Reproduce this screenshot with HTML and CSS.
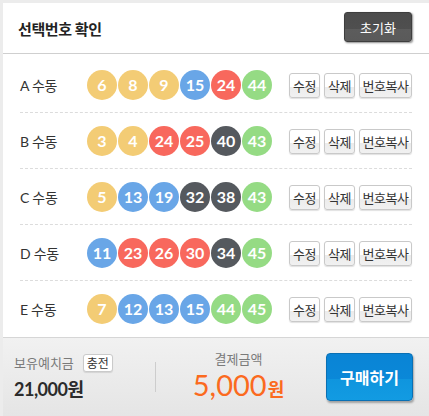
FILE: index.html
```html
<!DOCTYPE html>
<html lang="ko">
<head>
    <meta charset="UTF-8">
    <meta name="viewport" content="width=device-width, initial-scale=1.0">
    <title>선택번호 확인</title>
    <link rel="stylesheet" href="styles.css">
</head>
<body>
    <div class="panel">
        <div class="glava">
            <h2 class="naslov">선택번호 확인</h2>
            <button class="gumbReset">초기화</button>
        </div>

        <ul class="popis">
            <li class="red">
                <span class="oznaka">A 수동</span>
                <span class="kugle">
                    <span class="kugla zuta">6</span><span class="kugla zuta">8</span><span class="kugla zuta">9</span><span class="kugla plava">15</span><span class="kugla crvena">24</span><span class="kugla zelena">44</span>
                </span>
                <span class="akcije">
                    <button class="gumbMali">수정</button>
                    <button class="gumbMali">삭제</button>
                    <button class="gumbMali siroki">번호복사</button>
                </span>
            </li>
            <li class="red">
                <span class="oznaka">B 수동</span>
                <span class="kugle">
                    <span class="kugla zuta">3</span><span class="kugla zuta">4</span><span class="kugla crvena">24</span><span class="kugla crvena">25</span><span class="kugla siva">40</span><span class="kugla zelena">43</span>
                </span>
                <span class="akcije">
                    <button class="gumbMali">수정</button>
                    <button class="gumbMali">삭제</button>
                    <button class="gumbMali siroki">번호복사</button>
                </span>
            </li>
            <li class="red">
                <span class="oznaka">C 수동</span>
                <span class="kugle">
                    <span class="kugla zuta">5</span><span class="kugla plava">13</span><span class="kugla plava">19</span><span class="kugla siva">32</span><span class="kugla siva">38</span><span class="kugla zelena">43</span>
                </span>
                <span class="akcije">
                    <button class="gumbMali">수정</button>
                    <button class="gumbMali">삭제</button>
                    <button class="gumbMali siroki">번호복사</button>
                </span>
            </li>
            <li class="red">
                <span class="oznaka">D 수동</span>
                <span class="kugle">
                    <span class="kugla plava">11</span><span class="kugla crvena">23</span><span class="kugla crvena">26</span><span class="kugla crvena">30</span><span class="kugla siva">34</span><span class="kugla zelena">45</span>
                </span>
                <span class="akcije">
                    <button class="gumbMali">수정</button>
                    <button class="gumbMali">삭제</button>
                    <button class="gumbMali siroki">번호복사</button>
                </span>
            </li>
            <li class="red">
                <span class="oznaka">E 수동</span>
                <span class="kugle">
                    <span class="kugla zuta">7</span><span class="kugla plava">12</span><span class="kugla plava">13</span><span class="kugla plava">15</span><span class="kugla zelena">44</span><span class="kugla zelena">45</span>
                </span>
                <span class="akcije">
                    <button class="gumbMali">수정</button>
                    <button class="gumbMali">삭제</button>
                    <button class="gumbMali siroki">번호복사</button>
                </span>
            </li>
        </ul>

        <div class="podnozje">
            <div class="stanje">
                <div class="stanjeRed">
                    <span class="sivo">보유예치금</span>
                    <button class="gumbPunjenje">충전</button>
                </div>
                <div class="iznos">21,000원</div>
            </div>
            <div class="crta"></div>
            <div class="placanje">
                <div class="sivo">결제금액</div>
                <div class="cijena"><span class="broj">5,000</span><span class="valuta">원</span></div>
            </div>
            <button class="gumbKupi">구매하기</button>
        </div>
    </div>
</body>
</html>
```

FILE: styles.css
```css
body{
    margin: 0;
    background-color: #ececec;
    font-family: Lato, "Noto Sans CJK KR", sans-serif;
    color: #333;
}
.panel{
    margin: 3px 0 0 3px;
    height: 413px;
    background-color: white;
    display: flex;
    flex-direction: column;
}
.glava{
    height: 50px;
    border-bottom: 1px solid #cfcfcf;
    display: flex;
    align-items: center;
    justify-content: space-between;
    padding: 0 17px 0 15px;
}
.naslov{
    margin: 0;
    font-size: 15px;
    font-weight: bold;
    color: #222;
    letter-spacing: -0.4px;
}
.gumbReset{
    width: 68px;
    height: 30px;
    margin-bottom: 2px;
    border: 1px solid #3e3e3e;
    border-radius: 3px;
    background: linear-gradient(#4c4c4c 0, #4f4f4f 58%, #5c5c5c 58%, #5a5a5a 100%);
    color: white;
    font-family: "Noto Sans CJK KR", sans-serif;
    font-size: 13px;
    box-shadow: 1px 1px 2px rgba(0,0,0,0.45);
    padding: 0;
}

.popis{ list-style-type: none; margin: 0 17px; padding: 3px 0 1px 0; }
.red{
    height: 55px;
    display: flex;
    align-items: center;
    border-bottom: 1px dashed #dcdcdc;
}
.red:last-child{ border-bottom: none; }
.oznaka{
    width: 67px;
    font-size: 14px;
    color: #333;
    letter-spacing: -0.3px;
}
.kugle{ display: flex; gap: 1px; }
.kugla{
    width: 30px;
    height: 30px;
    border-radius: 50%;
    display: flex;
    align-items: center;
    justify-content: center;
    color: white;
    font-family: Lato, sans-serif;
    font-weight: bold;
    font-size: 16px;
}
.zuta{ background-color: #f3cc75; }
.plava{ background-color: #69a6e7; }
.crvena{ background-color: #f8685d; }
.siva{ background-color: #55595e; }
.zelena{ background-color: #95db84; }

.akcije{ margin-left: auto; display: flex; gap: 4px; margin-top: 1px; }
.gumbMali{
    width: 31px;
    height: 25px;
    padding: 0;
    border: 1px solid #c9c9c9;
    border-radius: 3px;
    background: linear-gradient(#fff 0, #fff 55%, #ebebeb 55%, #f1f1f1 100%);
    color: #333;
    font-family: "Noto Sans CJK KR", sans-serif;
    font-size: 13px;
    letter-spacing: -0.5px;
    box-shadow: 0 1px 1px rgba(0,0,0,0.12);
}
.gumbMali.siroki{ width: 53px; }

.podnozje{
    flex: 1;
    border-top: 1px solid #d6d6d6;
    background: linear-gradient(#f1f1f1, #e5e5e5);
    display: flex;
    align-items: center;
    padding: 0 16px 0 11px;
}
.stanje{ width: 141px; }
.stanjeRed{ display: flex; align-items: center; gap: 9px; }
.sivo{
    font-family: "Noto Sans CJK KR", sans-serif;
    font-size: 13px;
    color: #7a7a7a;
    line-height: 18px;
}
.gumbPunjenje{
    width: 30px;
    height: 18px;
    padding: 0;
    border: 1px solid #cacaca;
    border-radius: 3px;
    background-color: white;
    color: #333;
    font-family: "Noto Sans CJK KR", sans-serif;
    font-size: 12px;
    line-height: 14px;
    box-shadow: 0 1px 1px rgba(0,0,0,0.1);
}
.iznos{
    margin-top: 6px;
    font-size: 18px;
    font-weight: bold;
    color: #2b2b2b;
    letter-spacing: -0.5px;
    line-height: 22px;
}
.crta{ width: 1px; height: 30px; background-color: #cdcdcd; }
.placanje{ flex: 1; text-align: center; margin-right: 5px; }
.cijena{ color: #fb6a1e; line-height: 30px; margin-top: 2px; }
.broj{ font-family: Lato, sans-serif; font-size: 29px; }
.valuta{ font-family: "Noto Sans CJK KR", sans-serif; font-size: 18px; font-weight: bold; margin-left: 1px; }
.gumbKupi{
    width: 87px;
    height: 48px;
    border: 1px solid #0a70b4;
    border-radius: 4px;
    background: linear-gradient(#0a84d5 0, #0a88d8 55%, #0f95de 55%, #129be2 100%);
    color: white;
    font-family: "Noto Sans CJK KR", sans-serif;
    font-size: 16px;
    font-weight: bold;
    box-shadow: 1px 2px 2px rgba(0,0,0,0.3);
    padding: 0;
}
```
